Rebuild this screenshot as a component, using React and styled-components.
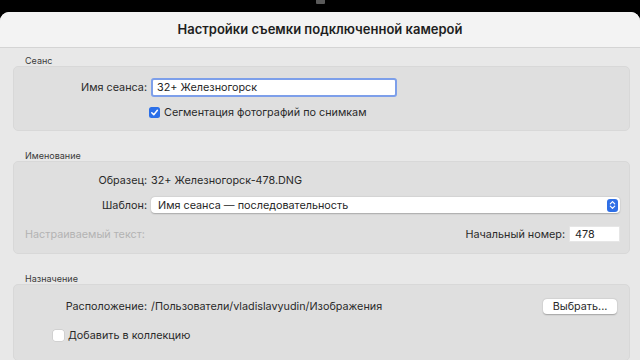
import React from "react";
import styled, { createGlobalStyle } from "styled-components";

const Global = createGlobalStyle`
  html, body { margin: 0; padding: 0; background: #000; }
  body { font-family: Inter, "Noto Sans", "Liberation Sans", sans-serif; color: #262626; }
  * { box-sizing: border-box; }
`;

const Screen = styled.div`
  width: 640px;
  height: 360px;
  overflow: hidden;
  background: #000;
  display: flex;
  flex-direction: column;
`;

const TopBar = styled.div`
  height: 12px;
  flex: none;
  display: flex;
  justify-content: center;
  padding-left: 1px;
`;

const Notch = styled.div`
  width: 9px;
  height: 4px;
  background: #5a5a5a;
  border-radius: 0 0 1px 1px;
`;

const Window = styled.div`
  flex: 1;
  background: #e8e8e8;
  border-radius: 9px 9px 0 0;
  overflow: hidden;
  display: flex;
  flex-direction: column;
`;

const TitleBar = styled.div`
  height: 36px;
  flex: none;
  background: #f3f3f3;
  border-bottom: 1px solid #d4d4d4;
  display: flex;
  align-items: center;
  justify-content: center;
  font-size: 13px;
  font-weight: 600;
  color: #1e1e1e;
  padding-bottom: 1px;
`;

const Body = styled.div`
  padding: 7px 10px 0 13px;
  display: flex;
  flex-direction: column;
`;

const Section = styled.section`
  display: flex;
  flex-direction: column;
  margin-top: ${(p) => p.$mt || 0}px;
`;

const SectionLabel = styled.div`
  font-size: 9px;
  line-height: 11px;
  height: 11px;
  padding-left: 12px;
  color: #3a3a3a;
`;

const Box = styled.div`
  background: #dfdfdf;
  border: 1px solid #d8d8d8;
  border-radius: 5px;
  padding: ${(p) => p.$pad};
  display: flex;
  flex-direction: column;
`;

const Row = styled.div`
  display: grid;
  grid-template-columns: ${(p) => (p.$single ? "1fr" : "133px 1fr")};
  column-gap: 4px;
  align-items: center;
  height: ${(p) => p.$h || 16}px;
  margin-top: ${(p) => p.$mt || 0}px;
  font-size: 10.8px;
`;

const SplitRow = styled.div`
  display: flex;
  align-items: center;
  justify-content: space-between;
  height: 16px;
  margin-top: ${(p) => p.$mt || 0}px;
  padding-left: 11px;
  font-size: 10.8px;
`;

const Label = styled.div`
  text-align: right;
  color: #2a2a2a;
`;

const Value = styled.div`
  color: #2a2a2a;
  white-space: nowrap;
  display: flex;
  align-items: center;
  justify-content: space-between;
`;

const TextInput = styled.div`
  width: ${(p) => p.$w}px;
  height: ${(p) => p.$h}px;
  background: #fff;
  display: flex;
  align-items: center;
  padding-left: ${(p) => p.$pl}px;
  border: ${(p) => (p.$focus ? "2.5px solid #7d9fea" : "1px solid #e6e6e6")};
  border-radius: ${(p) => (p.$focus ? 3 : 1)}px;
  color: #262626;
  font-size: 10.8px;
`;

const Disabled = styled.div`
  color: #b3b3b3;
`;

const RightGroup = styled.div`
  display: flex;
  align-items: center;
  gap: 4px;
`;

const Popup = styled.div`
  height: 16px;
  background: #fff;
  border-radius: 4px;
  box-shadow: 0 0.5px 1.5px rgba(0, 0, 0, 0.25);
  display: flex;
  align-items: center;
  justify-content: space-between;
  padding: 0 2px 0 7px;
  color: #262626;
`;

const Stepper = styled.div`
  width: 11px;
  height: 13px;
  border-radius: 3px;
  background: #2f6fe6;
  display: flex;
  align-items: center;
  justify-content: center;
`;

const CheckRow = styled.div`
  display: flex;
  align-items: center;
  gap: 4px;
  margin-left: ${(p) => p.$ml || 0}px;
  color: #2a2a2a;
`;

const CheckBox = styled.div`
  width: 11px;
  height: 11px;
  border-radius: 2.5px;
  flex: none;
  background: ${(p) => (p.$on ? "#2b6fe8" : "#fff")};
  box-shadow: ${(p) => (p.$on ? "none" : "0 0 0 0.5px rgba(0,0,0,0.12)")};
  display: flex;
  align-items: center;
  justify-content: center;
`;

const Button = styled.div`
  width: 74px;
  height: 15px;
  background: #fff;
  border-radius: 4px;
  box-shadow: 0 0.5px 1.5px rgba(0, 0, 0, 0.28);
  display: flex;
  align-items: center;
  justify-content: center;
  font-size: 10.8px;
  color: #2a2a2a;
`;

const Check = () => (
  <svg width="9" height="9" viewBox="0 0 10 10">
    <path d="M2 5.3 L4.2 7.5 L8.2 2.6" fill="none" stroke="#fff" strokeWidth="1.7" strokeLinecap="round" strokeLinejoin="round" />
  </svg>
);

const Arrows = () => (
  <svg width="7" height="10" viewBox="0 0 7 10">
    <path d="M1.3 3.8 L3.5 1.6 L5.7 3.8 M1.3 6.2 L3.5 8.4 L5.7 6.2" fill="none" stroke="#fff" strokeWidth="1.2" strokeLinecap="round" strokeLinejoin="round" />
  </svg>
);

export default function App() {
  return (
    <>
      <Global />
      <Screen>
        <TopBar>
          <Notch />
        </TopBar>
        <Window>
          <TitleBar>Настройки съемки подключенной камерой</TitleBar>
          <Body>
            <Section>
              <SectionLabel>Сеанс</SectionLabel>
              <Box $pad="11px 0 11px 0">
                <Row $h={19}>
                  <Label>Имя сеанса:</Label>
                  <TextInput $focus $w={246} $h={19} $pl={4}>32+ Железногорск</TextInput>
                </Row>
                <Row $h={14} $mt={8}>
                  <span />
                  <CheckRow $ml={-2}>
                    <CheckBox $on>
                      <Check />
                    </CheckBox>
                    Сегментация фотографий по снимкам
                  </CheckRow>
                </Row>
              </Box>
            </Section>

            <Section $mt={19}>
              <SectionLabel>Именование</SectionLabel>
              <Box $pad="10px 9px 11px 0">
                <Row>
                  <Label>Образец:</Label>
                  <Value>32+ Железногорск-478.DNG</Value>
                </Row>
                <Row $mt={9}>
                  <Label>Шаблон:</Label>
                  <Popup>
                    Имя сеанса — последовательность
                    <Stepper>
                      <Arrows />
                    </Stepper>
                  </Popup>
                </Row>
                <SplitRow $mt={13}>
                  <Disabled>Настраиваемый текст:</Disabled>
                  <RightGroup>
                    <Label>Начальный номер:</Label>
                    <TextInput $w={51} $h={16} $pl={5}>478</TextInput>
                  </RightGroup>
                </SplitRow>
              </Box>
            </Section>

            <Section $mt={19}>
              <SectionLabel>Назначение</SectionLabel>
              <Box $pad="14px 12px 18px 0">
                <Row $h={15}>
                  <Label>Расположение:</Label>
                  <Value>
                    /Пользователи/vladislavyudin/Изображения
                    <Button>Выбрать...</Button>
                  </Value>
                </Row>
                <Row $h={14} $mt={14} $single>
                  <CheckRow $ml={39}>
                    <CheckBox />
                    Добавить в коллекцию
                  </CheckRow>
                </Row>
              </Box>
            </Section>
          </Body>
        </Window>
      </Screen>
    </>
  );
}
